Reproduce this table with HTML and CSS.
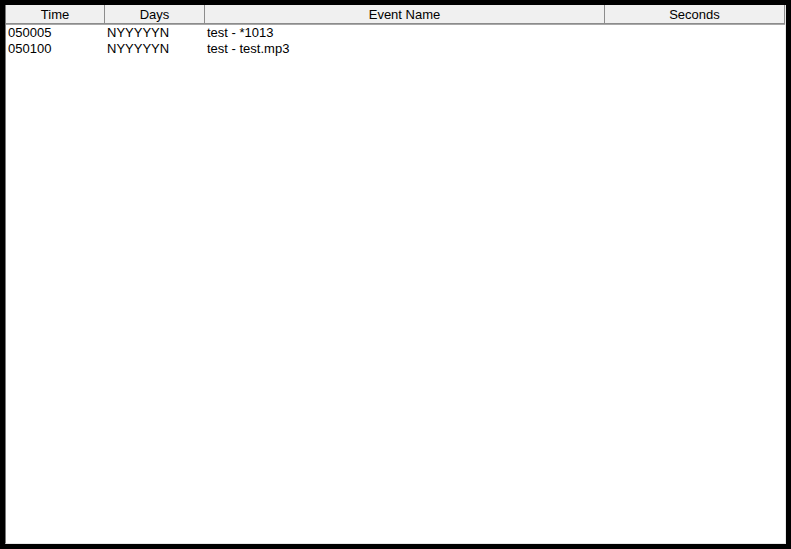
FILE: index.html
```html
<!DOCTYPE html>
<html>
<head>
<meta charset="utf-8">
<link rel="stylesheet" href="styles.css">
</head>
<body>
<div class="frame">
  <div class="list">
    <div class="header">
      <div class="hcell">Time</div>
      <div class="hcell">Days</div>
      <div class="hcell">Event Name</div>
      <div class="hcell last">Seconds</div>
    </div>
    <div class="rows">
      <div class="row">
        <div class="cell">050005</div>
        <div class="cell">NYYYYYN</div>
        <div class="cell">test - *1013</div>
        <div class="cell"></div>
      </div>
      <div class="row">
        <div class="cell">050100</div>
        <div class="cell">NYYYYYN</div>
        <div class="cell">test - test.mp3</div>
        <div class="cell"></div>
      </div>
    </div>
  </div>
</div>
</body>
</html>
```
FILE: styles.css
```css
html, body {
  margin: 0;
  padding: 0;
  background: #000;
  width: 791px;
  height: 549px;
  overflow: hidden;
}
body {
  padding: 5px 5px 5px 5px;
  box-sizing: border-box;
}
.frame {
  width: 781px;
  height: 539px;
  box-sizing: border-box;
  background: #fff;
  border-left: 1px solid #7a7a7a;
  border-right: 1px solid #e8e8e8;
  border-bottom: 1px solid #e8e8e8;
  font-family: "Liberation Sans", Arial, sans-serif;
  font-size: 13px;
  color: #000;
}
.list {
  height: 100%;
  display: flex;
  flex-direction: column;
}
.header {
  display: grid;
  grid-template-columns: 99px 100px 400px 1fr;
  height: 18px;
  background: #f0f0f0;
  border-bottom: 1px solid #8c8c8c;
  box-shadow: 0 1px 0 #a8a8a8;
}
.hcell {
  text-align: center;
  line-height: 19px;
  border-right: 1px solid #8c8c8c;
  overflow: hidden;
  white-space: nowrap;
}
.rows {
  padding-top: 1px;
}
.row {
  display: grid;
  grid-template-columns: 99px 100px 400px 1fr;
  height: 16px;
}
.cell {
  padding-left: 2px;
  line-height: 16px;
  white-space: nowrap;
  overflow: hidden;
}
```
